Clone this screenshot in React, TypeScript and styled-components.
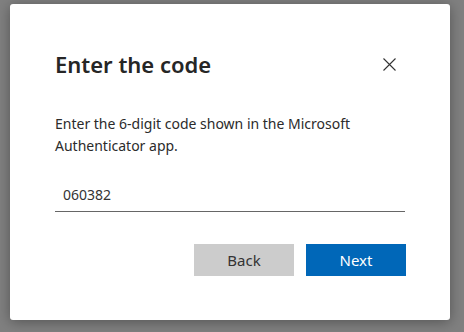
import * as React from 'react';
import styled, {createGlobalStyle} from 'styled-components';

const GlobalStyle = createGlobalStyle`
  html, body {
    margin: 0;
    padding: 0;
    background: #808080;
  }
  body {
    font-family: 'Noto Sans', 'Open Sans', sans-serif;
    color: #1b1b1b;
  }
`;

const Page = styled.div`
  width: 464px;
  height: 332px;
  overflow: hidden;
  padding: 4px 14px 0 10px;
  box-sizing: border-box;
`;

const Dialog = styled.div`
  width: 440px;
  height: 316px;
  box-sizing: border-box;
  background: #fff;
  border-radius: 3px;
  box-shadow: 0 2px 14px rgba(0, 0, 0, 0.35);
  padding: 45px 45px 0 45px;
  display: flex;
  flex-direction: column;
`;

const Header = styled.div`
  display: flex;
  align-items: center;
  justify-content: space-between;
`;

const Title = styled.h1`
  margin: 0;
  font-size: 22px;
  line-height: 30px;
  font-weight: 600;
  color: #262626;
`;

const CloseButton = styled.button`
  border: 0;
  background: none;
  padding: 0;
  width: 14px;
  height: 14px;
  margin-right: 9px;
  display: flex;
  align-items: center;
  justify-content: center;
  cursor: pointer;
`;

const Message = styled.p`
  margin: 34px 0 0;
  font-size: 14px;
  line-height: 22px;
  color: #2b2b2b;
`;

const CodeInput = styled.input`
  margin-top: 28px;
  border: 0;
  border-bottom: 1px solid #666;
  outline: none;
  padding: 0 0 6px 8px;
  font-family: inherit;
  font-size: 14px;
  line-height: 20px;
  color: #333;
  background: transparent;
`;

const Actions = styled.div`
  margin: 32px -1px 0 0;
  display: flex;
  justify-content: flex-end;
  gap: 12px;
`;

const Button = styled.button<{$primary?: boolean}>`
  width: 100px;
  height: 32px;
  border: 0;
  font-family: inherit;
  font-size: 15px;
  color: ${p => (p.$primary ? '#fff' : '#333')};
  background: ${p => (p.$primary ? '#0067b8' : '#cccccc')};
  cursor: pointer;
`;

export default function App() {
  return (
    <>
      <GlobalStyle />
      <Page>
        <Dialog>
          <Header>
            <Title>Enter the code</Title>
            <CloseButton aria-label='Close'>
              <svg width='13' height='13' viewBox='0 0 13 13'>
                <path d='M0.5 0.5 L12.5 12.5 M12.5 0.5 L0.5 12.5' stroke='#333' strokeWidth='1.1' fill='none' />
              </svg>
            </CloseButton>
          </Header>
          <Message>Enter the 6-digit code shown in the Microsoft Authenticator app.</Message>
          <CodeInput defaultValue='060382' />
          <Actions>
            <Button>Back</Button>
            <Button $primary>Next</Button>
          </Actions>
        </Dialog>
      </Page>
    </>
  );
}
